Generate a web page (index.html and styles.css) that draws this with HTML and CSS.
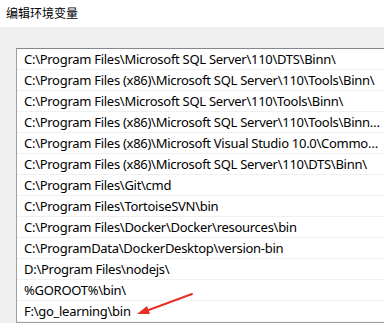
FILE: index.html
```html
<!DOCTYPE html>
<html lang="zh-CN">
<head>
	<meta charset="utf-8">
	<title>编辑环境变量</title>
	<link rel="stylesheet" href="styles.css">
</head>
<body>
	<div class="title-bar">编辑环境变量</div>
	<div class="panel">
		<div class="path-list">
			<div class="row">C:\Program Files\Microsoft SQL Server\110\DTS\Binn\</div>
			<div class="row">C:\Program Files (x86)\Microsoft SQL Server\110\Tools\Binn\</div>
			<div class="row">C:\Program Files\Microsoft SQL Server\110\Tools\Binn\</div>
			<div class="row">C:\Program Files (x86)\Microsoft SQL Server\110\Tools\Binn\ManagementStudio\</div>
			<div class="row">C:\Program Files (x86)\Microsoft Visual Studio 10.0\Common7\IDE\PrivateAssemblies\</div>
			<div class="row">C:\Program Files (x86)\Microsoft SQL Server\110\DTS\Binn\</div>
			<div class="row">C:\Program Files\Git\cmd</div>
			<div class="row">C:\Program Files\TortoiseSVN\bin</div>
			<div class="row">C:\Program Files\Docker\Docker\resources\bin</div>
			<div class="row">C:\ProgramData\DockerDesktop\version-bin</div>
			<div class="row">D:\Program Files\nodejs\</div>
			<div class="row">%GOROOT%\bin\</div>
			<div class="row">F:\go_learning\bin</div>
		</div>
	</div>
	<svg class="arrow" width="64" height="28" viewBox="0 0 64 28">
		<line x1="58" y1="2" x2="12" y2="19" stroke="#e8302a" stroke-width="2" stroke-linecap="round"/>
		<polygon points="3,22 13,14 16,22" fill="#e8302a"/>
	</svg>
</body>
</html>
```

FILE: styles.css
```css
* {
	margin: 0;
	padding: 0;
}
body {
	width: 384px;
	height: 323px;
	overflow: hidden;
	position: relative;
	font-family: "Noto Sans", "Noto Sans CJK SC", sans-serif;
	font-size: 12px;
	color: #000;
	background: #f0f0f0;
}
.title-bar {
	height: 27px;
	line-height: 26px;
	padding-left: 6px;
	background: #fff;
	font-family: "Noto Sans CJK SC", sans-serif;
}
.panel {
	padding: 21px 0 0 16px;
}
.path-list {
	width: 367px;
	background: #fff;
	border: 1px solid #a0a0a0;
	border-top-color: #828790;
	border-right: none;
}
.row {
	height: 20px;
	line-height: 21px;
	padding-left: 7px;
	font-size: 13px;
	letter-spacing: -0.28px;
	border-bottom: 1px solid #f0f0f0;
	white-space: nowrap;
	overflow: hidden;
	text-overflow: ellipsis;
}
.arrow {
	position: absolute;
	left: 134px;
	top: 292px;
}
```
